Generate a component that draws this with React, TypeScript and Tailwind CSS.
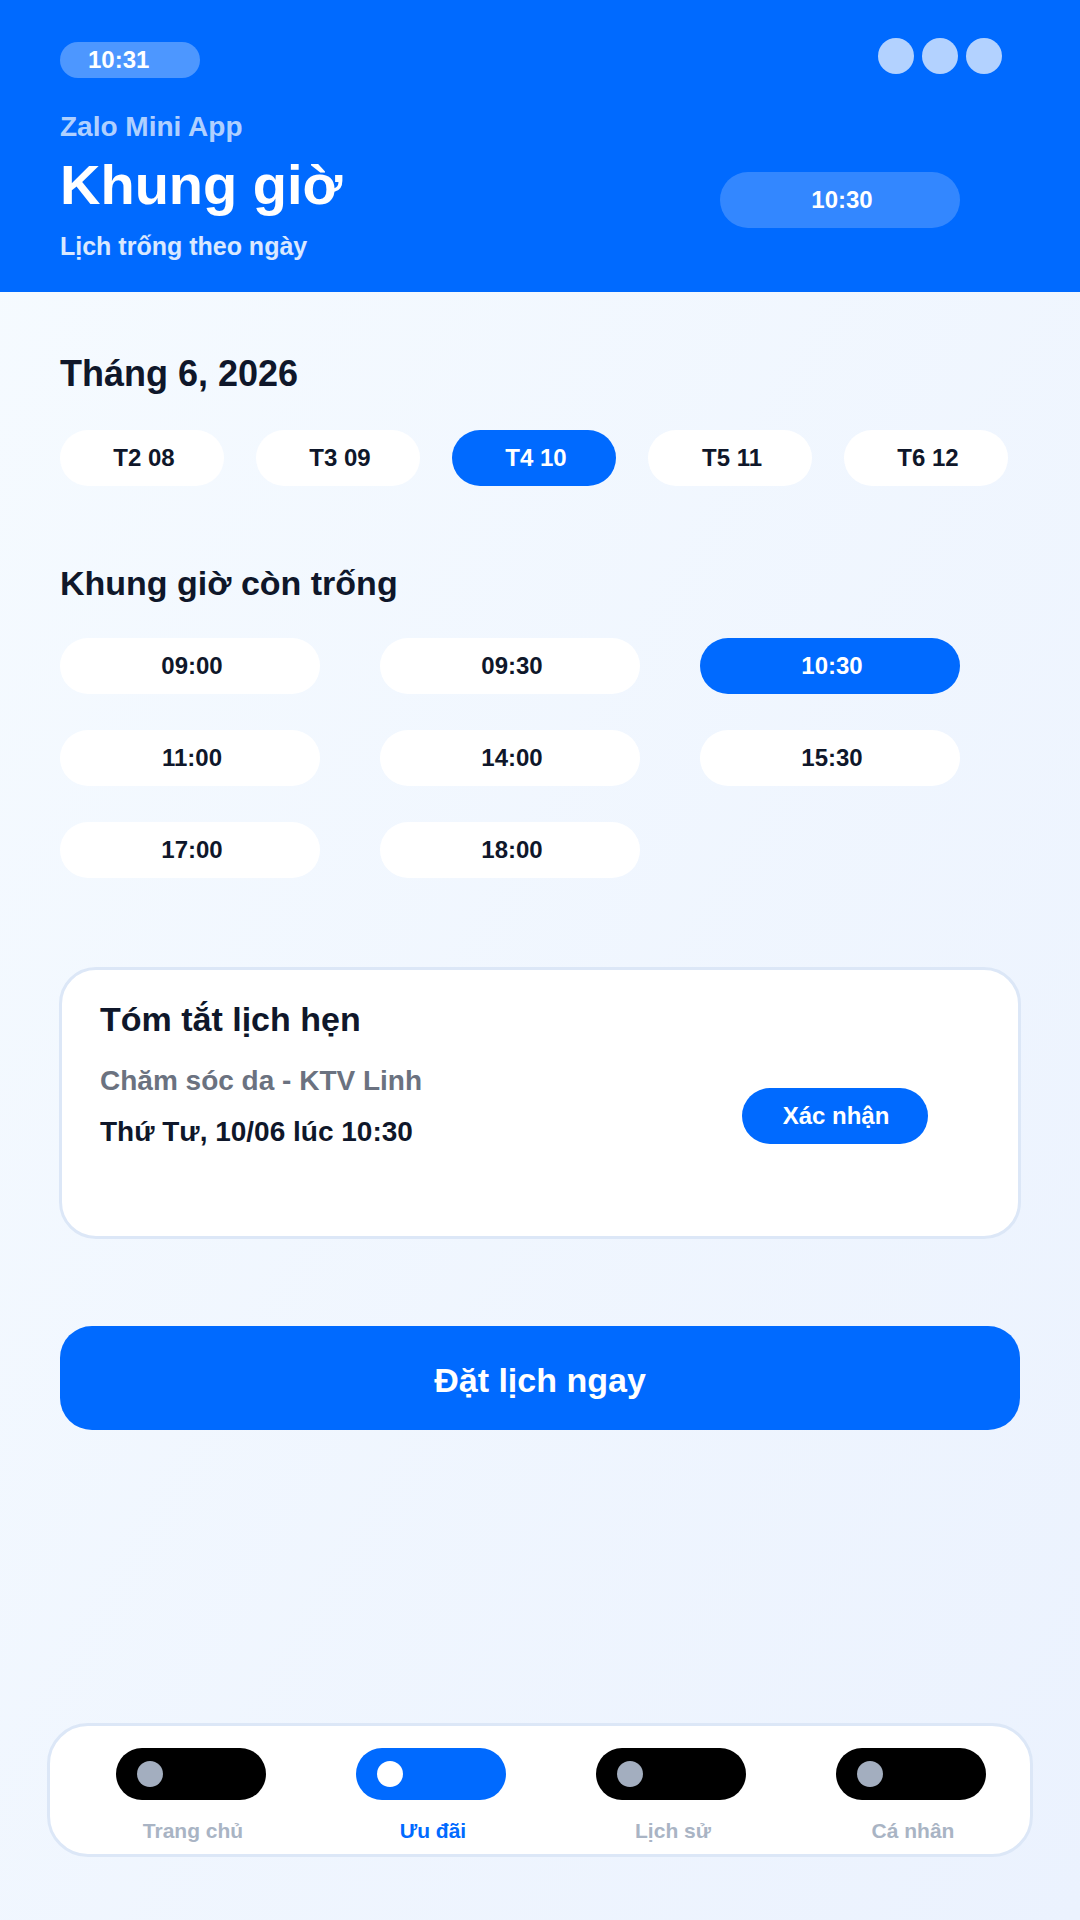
const dates = ["T2 08", "T3 09", "T4 10", "T5 11", "T6 12"];
const times = ["09:00", "09:30", "10:30", "11:00", "14:00", "15:30", "17:00", "18:00"];
const tabs = ["Trang chủ", "Ưu đãi", "Lịch sử", "Cá nhân"];

export default function App() {
  return (
    <div className="flex h-[1920px] w-[1080px] flex-col overflow-hidden bg-gradient-to-br from-[#f6fbff] to-[#ebf2fe] font-['Liberation_Sans',Arial,sans-serif] font-bold">
      {/* Header */}
      <header className="h-[292px] shrink-0 bg-[#006aff] px-[60px] pt-[38px]">
        <div className="flex items-start justify-between pr-[18px]">
          <div className="mt-1 flex h-9 w-[140px] items-center rounded-full bg-white/30 pl-7 text-[24px] leading-none text-white">
            10:31
          </div>
          <div className="flex gap-2">
            <span className="size-9 rounded-full bg-white/70" />
            <span className="size-9 rounded-full bg-white/70" />
            <span className="size-9 rounded-full bg-white/70" />
          </div>
        </div>
        <div className="mt-[34px] flex items-start justify-between pr-[60px]">
          <div>
            <p className="text-[28px] leading-[30px] text-white/70">Zalo Mini App</p>
            <h1 className="mt-[11px] text-[56px] leading-[64px] text-white">Khung giờ</h1>
            <p className="mt-[15px] text-[25px] leading-[28px] text-white/85">Lịch trống theo ngày</p>
          </div>
          <div className="mt-[60px] flex h-14 w-60 items-center justify-center rounded-full bg-white/20 pl-1 text-[24px] text-white">
            10:30
          </div>
        </div>
      </header>

      <main className="flex-1 px-[60px]">
        <h2 className="mt-[60px] text-[36px] leading-[44px] text-[#0f172a]">Tháng 6, 2026</h2>
        <div className="mt-[34px] flex gap-8">
          {dates.map((d, i) => (
            <div
              key={d}
              className={`flex h-14 w-[164px] items-center justify-center rounded-[28px] pl-1 text-[24px] ${
                i === 2 ? "bg-[#006aff] text-white" : "bg-white text-[#0f172a]"
              }`}
            >
              {d}
            </div>
          ))}
        </div>

        <h2 className="mt-[77px] text-[34px] leading-[40px] text-[#0f172a]">Khung giờ còn trống</h2>
        <div className="mt-[35px] grid w-[900px] grid-cols-[260px_260px_260px] gap-x-[60px] gap-y-9">
          {times.map((t) => (
            <div
              key={t}
              className={`flex h-14 items-center justify-center rounded-[28px] pl-1 text-[24px] ${
                t === "10:30" ? "bg-[#006aff] text-white" : "bg-white text-[#0f172a]"
              }`}
            >
              {t}
            </div>
          ))}
        </div>

        {/* Summary */}
        <section className="-ml-px mt-[89px] flex h-[272px] w-[962px] items-start justify-between rounded-[37px] border-[3px] border-[#dce7f7] bg-white pl-[38px] pr-[90px] pt-[29px]">
          <div>
            <h3 className="text-[34px] leading-[40px] text-[#0f172a]">Tóm tắt lịch hẹn</h3>
            <p className="mt-[25px] text-[28px] leading-[34px] text-[#6b7280]">Chăm sóc da - KTV Linh</p>
            <p className="mt-[17px] text-[28px] leading-[34px] text-[#0f172a]">Thứ Tư, 10/06 lúc 10:30</p>
          </div>
          <div className="mt-[89px] flex h-14 w-[186px] items-center justify-center rounded-full bg-[#006aff] pl-0.5 text-[24px] text-white">
            Xác nhận
          </div>
        </section>

        <div className="mt-[87px] flex h-[104px] w-[960px] items-center justify-center rounded-[32px] bg-[#006aff] pt-[5px] text-[34px] text-white">
          Đặt lịch ngay
        </div>
      </main>

      {/* Bottom nav */}
      <nav className="mx-[47px] mb-[63px] grid h-[134px] grid-cols-[repeat(4,240px)] rounded-[41px] border-[3px] border-[#dce7f7] bg-white pl-[21px] pt-[22px]">
        {tabs.map((t, i) => (
          <div key={t} className="flex flex-col items-center">
            <div className={`flex h-[52px] w-[150px] items-center rounded-[26px] pl-[21px] ${i === 1 ? "bg-[#006aff]" : "bg-black"}`}>
              <span className={`size-[26px] rounded-full ${i === 1 ? "bg-white" : "bg-[#a3aebf]"}`} />
            </div>
            <span className={`ml-1 mt-[19px] text-[21px] leading-6 ${i === 1 ? "text-[#006aff]" : "text-[#a9b4c4]"}`}>{t}</span>
          </div>
        ))}
      </nav>
    </div>
  );
}
